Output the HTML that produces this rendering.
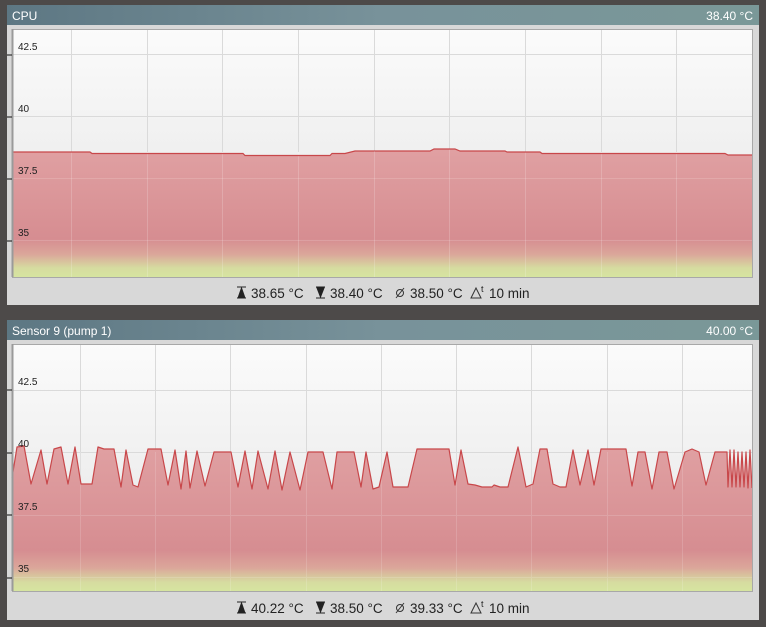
<!DOCTYPE html>
<html><head><meta charset="utf-8"><style>
html,body{margin:0;padding:0;background:#4d4a49;width:766px;height:627px;overflow:hidden}
svg{display:block}
text{font-family:"Liberation Sans",sans-serif}
</style></head><body>
<svg width="766" height="627" viewBox="0 0 766 627" xmlns="http://www.w3.org/2000/svg">
<defs>
<linearGradient id="hdr" x1="0" x2="1" y1="0" y2="0">
<stop offset="0" stop-color="#5d7783"/><stop offset="0.5" stop-color="#78929a"/><stop offset="1" stop-color="#7a9898"/></linearGradient>
<linearGradient id="bg1" gradientUnits="userSpaceOnUse" x1="0" y1="29" x2="0" y2="277">
<stop offset="0" stop-color="#fbfbfb"/><stop offset="1" stop-color="#e4e4e4"/></linearGradient>
<linearGradient id="bg2" gradientUnits="userSpaceOnUse" x1="0" y1="344" x2="0" y2="591">
<stop offset="0" stop-color="#fbfbfb"/><stop offset="1" stop-color="#e4e4e4"/></linearGradient>
<linearGradient id="f1" gradientUnits="userSpaceOnUse" x1="0" y1="150" x2="0" y2="277">
<stop offset="0" stop-color="#e0a0a2"/><stop offset="0.7" stop-color="#d68d91"/><stop offset="0.82" stop-color="#dba69a"/><stop offset="0.93" stop-color="#d6dca0"/><stop offset="1" stop-color="#d6e4a0"/></linearGradient>
<linearGradient id="f2" gradientUnits="userSpaceOnUse" x1="0" y1="446" x2="0" y2="591">
<stop offset="0" stop-color="#e0a0a2"/><stop offset="0.72" stop-color="#d68d91"/><stop offset="0.84" stop-color="#dba69a"/><stop offset="0.94" stop-color="#d6dca0"/><stop offset="1" stop-color="#d6e4a0"/></linearGradient>
</defs>

<!-- Panel 1 -->
<rect x="7" y="5" width="752" height="20" fill="url(#hdr)"/>
<text x="12" y="20" font-size="12" fill="#fff">CPU</text>
<text x="753" y="20" font-size="12" fill="#fff" text-anchor="end">38.40 °C</text>
<rect x="7" y="25" width="752" height="280" fill="#d8d8d8"/>
<rect x="12" y="29" width="740" height="248" fill="url(#bg1)"/>
<path d="M12,277 L12,152 L90,152 L92,153.5 L243,153.5 L245,155.5 L330,155.5 L332,153.5 L345,153.5 L355,151 L430,151 L434,149 L455,149 L460,151 L505,151 L507,152 L540,152 L542,153.5 L725,153.5 L728,155 L752,155 L752,277 Z" fill="url(#f1)"/>
<g stroke="#fff" stroke-opacity="0.18" stroke-width="1">
<path d="M71.5,29V277M147.5,29V277M222.5,29V277M298.5,29V277M374.5,29V277M449.5,29V277M525.5,29V277M601.5,29V277M676.5,29V277"/>
</g>
<g stroke="#dadada" stroke-width="1">
<path d="M71.5,29V152M147.5,29V152M222.5,29V152M298.5,29V152M374.5,29V152M449.5,29V149M525.5,29V152M601.5,29V152M676.5,29V152"/>
<path d="M12,54.5H752M12,116.5H752"/>
</g>
<g stroke="#fff" stroke-opacity="0.15"><path d="M12,178.5H752M12,240.5H752"/></g>
<path d="M12,152 L90,152 L92,153.5 L243,153.5 L245,155.5 L330,155.5 L332,153.5 L345,153.5 L355,151 L430,151 L434,149 L455,149 L460,151 L505,151 L507,152 L540,152 L542,153.5 L725,153.5 L728,155 L752,155" fill="none" stroke="#c8474a" stroke-width="1.2"/>
<path d="M12.5,29V277.5H752.5V29.5H12.5" fill="none" stroke="#a8a8a8"/>
<path d="M12.5,29V277" stroke="#9a9a9a" stroke-width="2"/>
<g stroke="#111"><path d="M7,55H12M7,117H12M7,179H12M7,241H12"/></g>
<g font-size="10" fill="#222"><text x="18" y="50">42.5</text><text x="18" y="112">40</text><text x="18" y="174">37.5</text><text x="18" y="236">35</text></g>
<g font-size="13.5" fill="#222">
<path d="M237,287H246M237,298H246M238,298L241.5,288L245,298Z" stroke="#222" fill="#222"/>
<text x="251" y="298">38.65 °C</text>
<path d="M316,287H325M316,298H325M317,288L320.5,297L324,288Z" stroke="#222" fill="#222"/>
<text x="330" y="298">38.40 °C</text>
<g stroke="#333" fill="none"><circle cx="400" cy="293" r="3.5"/><path d="M396,298L404,288"/></g>
<text x="410" y="298">38.50 °C</text>
<path d="M471,298L476,288L481,298Z" stroke="#333" fill="none"/><text x="481" y="292" font-size="9">t</text>
<text x="489" y="298">10 min</text>
</g>

<!-- Panel 2 -->
<rect x="7" y="320" width="752" height="20" fill="url(#hdr)"/>
<text x="12" y="335" font-size="12" fill="#fff">Sensor 9 (pump 1)</text>
<text x="753" y="335" font-size="12" fill="#fff" text-anchor="end">40.00 °C</text>
<rect x="7" y="340" width="752" height="280" fill="#d8d8d8"/>
<rect x="12" y="344" width="740" height="247" fill="url(#bg2)"/>
<g stroke="#dadada"><path d="M80.5,344V591M155.5,344V591M230.5,344V591M306.5,344V591M381.5,344V591M456.5,344V591M531.5,344V591M607.5,344V591M682.5,344V591M12,390.5H752M12,452.5H752"/></g>
<path d="M12,591 L12,478 L17,447 L24,446 L31,484 L41,450 L47,484 L54,449 L61,447 L68,484 L75,447 L81,484 L92,484 L98,447 L104,449 L114,449 L121,487 L126,450 L133,485 L138,487 L148,449 L161,449 L168,485 L175,450 L181,489 L186,451 L190,488 L197,451 L205,486 L214,452 L231,452 L238,487 L245,451 L252,489 L258,451 L268,489 L275,451 L282,490 L290,452 L300,490 L308,452 L323,452 L332,489 L337,452 L354,452 L361,487 L366,452 L373,489 L379,487 L387,452 L393,487 L408,487 L417,449 L449,449 L455,485 L461,450 L468,484 L475,485 L482,487 L492,487 L494,485 L500,487 L508,487 L518,447 L526,487 L533,484 L540,449 L547,449 L553,484 L560,487 L566,487 L573,450 L580,485 L588,450 L594,485 L601,449 L626,449 L632,486 L638,452 L645,452 L652,489 L659,452 L667,452 L674,489 L685,452 L692,449 L699,452 L706,485 L715,452 L727,452 L728,487 L730,450 L732,487 L734,450 L736,487 L738,452 L740,487 L742,452 L744,487 L746,452 L748,488 L750,450 L752,488 L752,591 Z" fill="url(#f2)"/>
<g stroke="#fff" stroke-opacity="0.15"><path d="M80.5,452V591M155.5,452V591M230.5,452V591M306.5,452V591M381.5,452V591M456.5,452V591M531.5,452V591M607.5,452V591M682.5,452V591M12,515.5H752M12,577.5H752"/></g>
<path d="M12,478 L17,447 L24,446 L31,484 L41,450 L47,484 L54,449 L61,447 L68,484 L75,447 L81,484 L92,484 L98,447 L104,449 L114,449 L121,487 L126,450 L133,485 L138,487 L148,449 L161,449 L168,485 L175,450 L181,489 L186,451 L190,488 L197,451 L205,486 L214,452 L231,452 L238,487 L245,451 L252,489 L258,451 L268,489 L275,451 L282,490 L290,452 L300,490 L308,452 L323,452 L332,489 L337,452 L354,452 L361,487 L366,452 L373,489 L379,487 L387,452 L393,487 L408,487 L417,449 L449,449 L455,485 L461,450 L468,484 L475,485 L482,487 L492,487 L494,485 L500,487 L508,487 L518,447 L526,487 L533,484 L540,449 L547,449 L553,484 L560,487 L566,487 L573,450 L580,485 L588,450 L594,485 L601,449 L626,449 L632,486 L638,452 L645,452 L652,489 L659,452 L667,452 L674,489 L685,452 L692,449 L699,452 L706,485 L715,452 L727,452 L728,487 L730,450 L732,487 L734,450 L736,487 L738,452 L740,487 L742,452 L744,487 L746,452 L748,488 L750,450 L752,488" fill="none" stroke="#c8474a" stroke-width="1.2" stroke-linejoin="round"/>
<path d="M12.5,344V591.5H752.5V344.5H12.5" fill="none" stroke="#a8a8a8"/>
<path d="M12.5,344V591" stroke="#9a9a9a" stroke-width="2"/>
<g stroke="#111"><path d="M7,390H12M7,453H12M7,515H12M7,578H12"/></g>
<g font-size="10" fill="#222"><text x="18" y="385">42.5</text><text x="18" y="447">40</text><text x="18" y="510">37.5</text><text x="18" y="572">35</text></g>
<g font-size="13.5" fill="#222">
<path d="M237,602H246M237,613H246M238,613L241.5,603L245,613Z" stroke="#222" fill="#222"/>
<text x="251" y="613">40.22 °C</text>
<path d="M316,602H325M316,613H325M317,603L320.5,612L324,603Z" stroke="#222" fill="#222"/>
<text x="330" y="613">38.50 °C</text>
<g stroke="#333" fill="none"><circle cx="400" cy="608" r="3.5"/><path d="M396,613L404,603"/></g>
<text x="410" y="613">39.33 °C</text>
<path d="M471,613L476,603L481,613Z" stroke="#333" fill="none"/><text x="481" y="607" font-size="9">t</text>
<text x="489" y="613">10 min</text>
</g>
</svg>
</body></html>
